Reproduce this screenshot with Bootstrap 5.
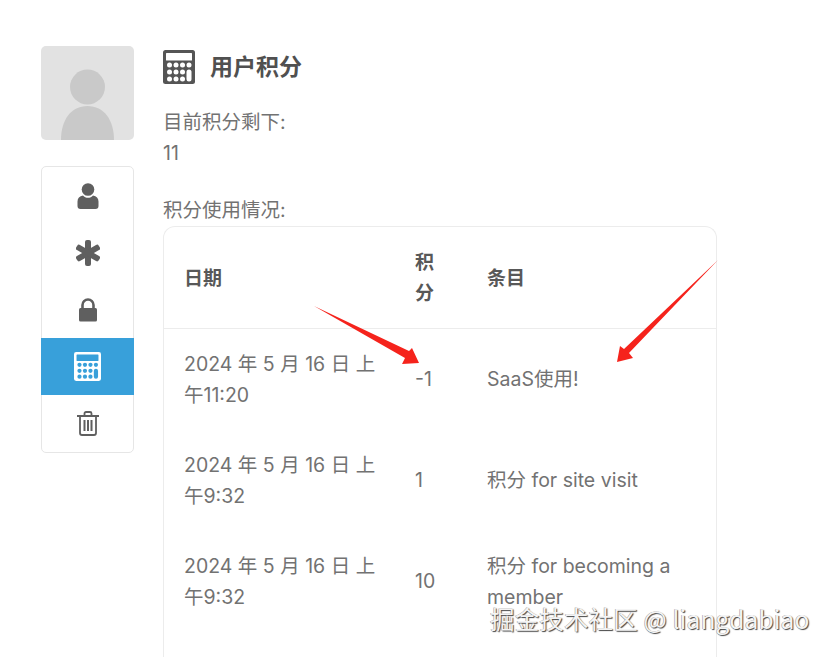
<!DOCTYPE html>
<html lang="zh">
<head>
    <meta charset="UTF-8">
    <meta name="viewport" content="width=device-width, initial-scale=1.0">
    <title>用户积分</title>
    <link href="https://cdn.jsdelivr.net/npm/bootstrap@5.3.0/dist/css/bootstrap.min.css" rel="stylesheet">
    <style>
        html, body {
            height: 657px;
            overflow: hidden;
        }
        body {
            font-family: Inter, "Noto Sans CJK SC", sans-serif;
            font-size: 19.5px;
            line-height: 31px;
            color: #727272;
            background: #fff;
            position: relative;
        }
        .page-wrap {
            padding: 46px 0 0 41px;
            gap: 29px;
        }
        .side-col {
            width: 93px;
            flex: none;
        }
        .avatar-box {
            height: 94px;
            background: #e2e2e2;
            border-radius: 5px;
            overflow: hidden;
            margin-bottom: 26px;
        }
        .avatar-box svg {
            display: block;
        }
        .side-menu {
            border: 1px solid #e6e6e6;
            border-radius: 5px;
            background: #fff;
        }
        .side-item {
            height: 57px;
            color: #5f5f5f;
        }
        .side-item.is-on {
            background: #38a0da;
            color: #fff;
            margin: 0 -1px;
        }
        .main-col {
            width: 554px;
            flex: none;
        }
        .title-row {
            height: 40px;
            margin-top: 1px;
            margin-bottom: 20px;
            gap: 15px;
            color: #555;
        }
        .title-row h1 {
            font-size: 23px;
            font-weight: 700;
            margin: 0;
            line-height: 40px;
            color: #505050;
        }
        .remain-block {
            margin-bottom: 26px;
        }
        .score-card {
            border: 1px solid #ececec;
            border-bottom: 0;
            border-radius: 12px 12px 0 0;
            height: 440px;
            overflow: hidden;
        }
        .score-table {
            table-layout: fixed;
            margin: 0;
            --bs-table-color: #727272;
            --bs-table-bg: transparent;
        }
        .score-table th, .score-table td {
            padding: 19.5px 20px;
            vertical-align: middle;
            border: 0;
        }
        .score-table td:first-child {
            padding-right: 14px;
        }
        .score-table thead th {
            padding-top: 20px;
            padding-bottom: 19px;
            color: #585858;
            font-weight: 700;
            font-size: 19px;
            border-bottom: 1px solid #ececec;
        }
        .col-date { width: 231px; }
        .col-points { width: 72px; }
        .arrow-layer {
            position: absolute;
            left: 0;
            top: 0;
            pointer-events: none;
        }
        .site-mark {
            position: absolute;
            left: 490px;
            top: 601px;
            font-family: "Noto Sans CJK SC", Inter, sans-serif;
            font-size: 24.5px;
            line-height: 36px;
            letter-spacing: 0.15px;
            color: #f4f4f4;
            text-shadow: 1px 1px 1px #444, -0.5px -0.5px 0 #999;
            white-space: nowrap;
        }
    </style>
</head>
<body>
    <svg width="0" height="0" class="position-absolute">
        <mask id="calc-holes">
            <rect width="32" height="34" fill="#fff"/>
            <g fill="#000">
                <rect x="3" y="3" width="26" height="7.500" rx="0.500"/>
                <circle cx="6.500" cy="15" r="2.500"/><circle cx="13" cy="15" r="2.500"/><circle cx="19.500" cy="15" r="2.500"/><circle cx="26" cy="15" r="2.500"/>
                <circle cx="6.500" cy="22" r="2.500"/><circle cx="13" cy="22" r="2.500"/><circle cx="19.500" cy="22" r="2.500"/>
                <circle cx="6.500" cy="29" r="2.500"/><circle cx="13" cy="29" r="2.500"/><circle cx="19.500" cy="29" r="2.500"/>
                <rect x="23.500" y="19.500" width="5" height="12" rx="2.500"/>
            </g>
        </mask>
        <symbol id="ico-calc" viewBox="0 0 32 34">
            <rect width="32" height="34" rx="2.500" fill="currentColor" mask="url(#calc-holes)"/>
        </symbol>
    </svg>

    <div class="page-wrap d-flex align-items-start">
        <div class="side-col">
            <div class="avatar-box">
                <svg width="93" height="94" viewBox="0 0 93 94">
                    <circle cx="46.500" cy="41" r="17.500" fill="#c9c9c9"/>
                    <path fill="#c9c9c9" d="M20 94c0-20 10-34 26.500-34S73 74 73 94z"/>
                </svg>
            </div>
            <div class="side-menu d-flex flex-column">
                <div class="side-item d-flex align-items-center justify-content-center">
                    <svg width="22" height="26" viewBox="0 0 22 26" fill="currentColor">
                        <circle cx="11" cy="6.500" r="6.300"/>
                        <path d="M6 12.500c1.300 1.500 3 2.300 5 2.300s3.700-.8 5-2.300c3.500.6 5.500 2.800 5.500 6V23a3 3 0 0 1-3 3h-15a3 3 0 0 1-3-3v-4.500c0-3.200 2-5.400 5.500-6z"/>
                    </svg>
                </div>
                <div class="side-item d-flex align-items-center justify-content-center">
                    <svg width="24" height="26" viewBox="0 0 24 26" fill="currentColor">
                        <g>
                            <rect x="9" y="0" width="6" height="26" rx="2"/>
                            <rect x="9" y="0" width="6" height="26" rx="2" transform="rotate(60 12 13)"/>
                            <rect x="9" y="0" width="6" height="26" rx="2" transform="rotate(-60 12 13)"/>
                        </g>
                    </svg>
                </div>
                <div class="side-item d-flex align-items-center justify-content-center">
                    <svg width="20" height="24" viewBox="0 0 20 24">
                        <path d="M4.500 11V7a5.500 5.500 0 0 1 11 0v4" fill="none" stroke="currentColor" stroke-width="2.600"/>
                        <rect x="1" y="10" width="18" height="13.500" rx="1.500" fill="currentColor"/>
                    </svg>
                </div>
                <div class="side-item is-on d-flex align-items-center justify-content-center">
                    <svg width="27" height="29" viewBox="0 0 32 34" preserveAspectRatio="none"><use href="#ico-calc"/></svg>
                </div>
                <div class="side-item d-flex align-items-center justify-content-center">
                    <svg width="22" height="25" viewBox="0 0 22 25" fill="none" stroke="currentColor" stroke-width="1.800">
                        <path d="M0 5h22M7.500 5V2.500A1.500 1.500 0 0 1 9 1h4a1.500 1.500 0 0 1 1.500 1.500V5"/>
                        <path d="M3 5v17a2 2 0 0 0 2 2h12a2 2 0 0 0 2-2V5"/>
                        <path d="M7.500 9v11M11 9v11M14.500 9v11" stroke-width="2"/>
                    </svg>
                </div>
            </div>
        </div>

        <div class="main-col">
            <div class="title-row d-flex align-items-center">
                <svg width="32" height="34" viewBox="0 0 32 34"><use href="#ico-calc"/></svg>
                <h1>用户积分</h1>
            </div>
            <div class="remain-block">
                <div>目前积分剩下:</div>
                <div>11</div>
            </div>
            <div>积分使用情况:</div>
            <div class="score-card">
                <table class="table score-table">
                    <colgroup>
                        <col class="col-date">
                        <col class="col-points">
                        <col>
                    </colgroup>
                    <thead>
                        <tr>
                            <th>日期</th>
                            <th>积分</th>
                            <th>条目</th>
                        </tr>
                    </thead>
                    <tbody>
                        <tr>
                            <td>2024 年 5 月 16 日 上午11:20</td>
                            <td>-1</td>
                            <td>SaaS使用!</td>
                        </tr>
                        <tr>
                            <td>2024 年 5 月 16 日 上午9:32</td>
                            <td>1</td>
                            <td>积分 for site visit</td>
                        </tr>
                        <tr>
                            <td>2024 年 5 月 16 日 上午9:32</td>
                            <td>10</td>
                            <td>积分 for becoming a member</td>
                        </tr>
                    </tbody>
                </table>
            </div>
        </div>
    </div>

    <!-- red arrows pasted over the screenshot -->
    <svg class="arrow-layer" width="830" height="657" viewBox="0 0 830 657">
        <path fill="#f5231c" d="M314 306L409 351L412 348L419 363L402 364L405 358z"/>
        <path fill="#f5231c" d="M718 260L629 353L633 358L617 362L620 346L624 349z"/>
    </svg>

    <div class="site-mark">掘金技术社区 @ liangdabiao</div>

    <script src="https://cdn.jsdelivr.net/npm/bootstrap@5.3.0/dist/js/bootstrap.bundle.min.js"></script>
</body>
</html>
